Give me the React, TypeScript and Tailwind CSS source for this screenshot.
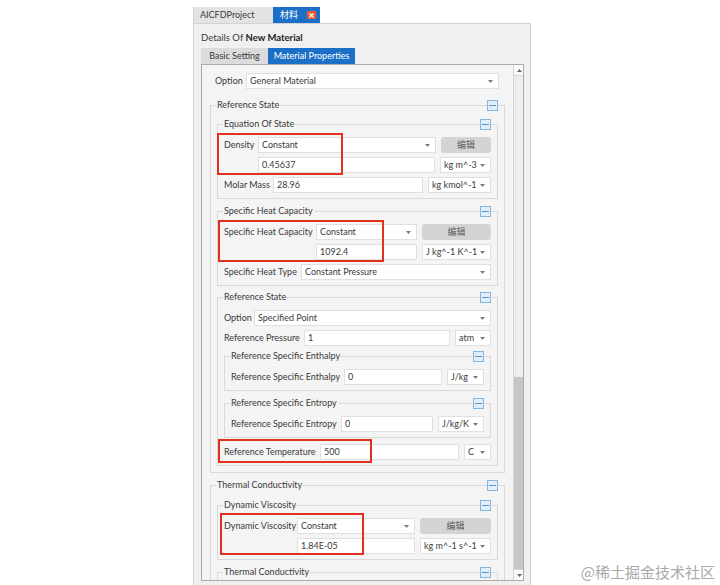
import React from 'react';

const BLUE = 'bg-[#1c6fc6]';

function Arrow() {
  return (
    <svg width="5" height="3" viewBox="0 0 5 3" className="shrink-0">
      <path d="M0 0 L5 0 L2.5 3 Z" fill="#7a7a7a" />
    </svg>
  );
}

function Combo({ text, className = '' }: { text: string; className?: string }) {
  return (
    <div className={`h-[16px] bg-white border border-[#e0e0e0] flex items-center justify-between pl-[3px] pr-[5px] ${className}`}>
      <span className="whitespace-nowrap overflow-hidden">{text}</span>
      <Arrow />
    </div>
  );
}

function Field({ text, className = '' }: { text: string; className?: string }) {
  return (
    <div className={`h-[16px] bg-white border border-[#e0e0e0] flex items-center pl-[3px] ${className}`}>
      <span className="whitespace-nowrap">{text}</span>
    </div>
  );
}

function EditButton({ className = '' }: { className?: string }) {
  return (
    <div className={`h-[16px] bg-[#d4d4d4] rounded-[3px] flex items-center justify-center text-[#5a5a5a] ${className}`}>
      编辑
    </div>
  );
}

function Collapse() {
  return (
    <div className="absolute right-[6px] top-[-6px] w-[11px] h-[11px] border border-[#86b5dd] bg-[#e2eef9] flex items-center justify-center">
      <div className="w-[7px] h-px bg-[#5d92c5]" />
    </div>
  );
}

function Group({ title, className = '', children }: { title: string; className?: string; children?: React.ReactNode }) {
  return (
    <div className={`relative border border-[#d9d9d9] px-[6px] pt-[12px] pb-[5px] flex flex-col gap-[4px] ${className}`}>
      <span className="absolute left-[5px] top-[-7px] px-px leading-[12px] bg-[#f4f4f4]">{title}</span>
      <Collapse />
      {children}
    </div>
  );
}

function RedBox({ className }: { className: string }) {
  return <div className={`absolute border-2 border-[#e2321f] pointer-events-none ${className}`} />;
}

function Label({ text, className }: { text: string; className: string }) {
  return <span className={`shrink-0 whitespace-nowrap ${className}`}>{text}</span>;
}

export default function App() {
  return (
    <div
      className="relative w-[720px] h-[585px] bg-white overflow-hidden text-[9px] text-[#3a3a3a]"
      style={{ fontFamily: 'Lato, "Noto Sans CJK SC", sans-serif' }}
    >
      <div className="ml-[193px] mt-[7px] w-[338px]">
        {/* document tabs */}
        <div className="flex h-[16px] items-stretch">
          <div className="w-[80px] bg-[#e3e3e3] border-l border-[#d4d4d4] flex items-center pl-[6px]">AICFDProject</div>
          <div className={`w-[47px] ${BLUE} text-white flex items-center pl-[7px] gap-[9px]`}>
            <span>材料</span>
            <span className="w-[9px] h-[8px] bg-[#ef5a2c] rounded-[1px] flex items-center justify-center">
              <svg width="5" height="5" viewBox="0 0 5 5">
                <path d="M0.5 0.5 L4.5 4.5 M4.5 0.5 L0.5 4.5" stroke="white" strokeWidth="1.2" />
              </svg>
            </span>
          </div>
          <div className="flex-1" />
        </div>

        {/* panel body */}
        <div className="h-[570px] bg-[#f0f0f0] border-x border-t border-[#d2d2d2] pl-[7px] pr-[6px] pt-[7px]">
          <div className="leading-[14px] text-[9.5px]">
            Details Of <span className="font-bold text-[#222]">New Material</span>
          </div>
          <div className="flex mt-[3px] h-[16px]">
            <div className="w-[67px] bg-[#dcdcdc] flex items-center justify-center">Basic Setting</div>
            <div className={`w-[87px] ${BLUE} text-white flex items-center justify-center`}>Material Properties</div>
          </div>

          <div className="h-[517px] border border-[#ababab] bg-[#f4f4f4] flex overflow-hidden">
            {/* scrolling content */}
            <div className="w-[311px] shrink-0 px-[8px] pt-[8px] flex flex-col overflow-hidden">
              <div className="flex items-center ml-[5px] mr-[6px]">
                <Label text="Option" className="w-[31px]" />
                <Combo text="General Material" className="flex-1" />
              </div>

              <Group title="Reference State" className="mt-[16px] pb-[6px]">
                <Group title="Equation Of State" className="mt-[6px]">
                  <div className="relative flex flex-col gap-[4px]">
                    <div className="flex items-center">
                      <Label text="Density" className="w-[34px]" />
                      <Combo text="Constant" className="flex-1" />
                      <EditButton className="w-[50px] ml-[5px]" />
                    </div>
                    <div className="flex items-center">
                      <div className="w-[34px] shrink-0" />
                      <Field text="0.45637" className="flex-1" />
                      <Combo text="kg m^-3" className="w-[51px] ml-[5px]" />
                    </div>
                    <RedBox className="left-[-7px] top-[-4px] w-[126px] h-[42px]" />
                  </div>
                  <div className="flex items-center">
                    <Label text="Molar Mass" className="w-[49px]" />
                    <Field text="28.96" className="flex-1" />
                    <Combo text="kg kmol^-1" className="w-[63px] ml-[5px]" />
                  </div>
                </Group>

                <Group title="Specific Heat Capacity" className="mt-[8px]">
                  <div className="relative flex flex-col gap-[4px]">
                    <div className="flex items-center">
                      <Label text="Specific Heat Capacity" className="w-[92px]" />
                      <Combo text="Constant" className="flex-1" />
                      <EditButton className="w-[69px] ml-[5px]" />
                    </div>
                    <div className="flex items-center">
                      <div className="w-[92px] shrink-0" />
                      <Field text="1092.4" className="flex-1" />
                      <Combo text="J kg^-1 K^-1" className="w-[69px] ml-[5px]" />
                    </div>
                    <RedBox className="left-[-6px] top-[-4px] w-[166px] h-[42px]" />
                  </div>
                  <div className="flex items-center">
                    <Label text="Specific Heat Type" className="w-[77px]" />
                    <Combo text="Constant Pressure" className="flex-1" />
                  </div>
                </Group>

                <Group title="Reference State" className="mt-[7px]">
                  <div className="flex items-center">
                    <Label text="Option" className="w-[30px]" />
                    <Combo text="Specified Point" className="flex-1" />
                  </div>
                  <div className="flex items-center">
                    <Label text="Reference Pressure" className="w-[80px]" />
                    <Field text="1" className="flex-1" />
                    <Combo text="atm" className="w-[36px] ml-[5px]" />
                  </div>

                  <Group title="Reference Specific Enthalpy" className="mt-[6px] pb-[4px]">
                    <div className="flex items-center">
                      <Label text="Reference Specific Enthalpy" className="w-[113px]" />
                      <Field text="0" className="flex-1" />
                      <Combo text="J/kg" className="w-[37px] ml-[5px]" />
                    </div>
                  </Group>

                  <Group title="Reference Specific Entropy" className="mt-[8px]">
                    <div className="flex items-center">
                      <Label text="Reference Specific Entropy" className="w-[110px]" />
                      <Field text="0" className="flex-1" />
                      <Combo text="J/kg/K" className="w-[46px] ml-[5px]" />
                    </div>
                  </Group>

                  <div className="relative flex items-center mt-[2px]">
                    <Label text="Reference Temperature" className="w-[96px]" />
                    <Field text="500" className="flex-1" />
                    <Combo text="C" className="w-[27px] ml-[5px]" />
                    <RedBox className="left-[-6px] top-[-5px] w-[154px] h-[24px]" />
                  </div>
                </Group>
              </Group>

              <Group title="Thermal Conductivity" className="mt-[12px] shrink-0">
                <Group title="Dynamic Viscosity" className="mt-[7px] pb-[4px]">
                  <div className="relative flex flex-col gap-[4px]">
                    <div className="flex items-center">
                      <Label text="Dynamic Viscosity" className="w-[73px]" />
                      <Combo text="Constant" className="flex-1" />
                      <EditButton className="w-[71px] ml-[5px]" />
                    </div>
                    <div className="flex items-center">
                      <div className="w-[73px] shrink-0" />
                      <Field text="1.84E-05" className="flex-1" />
                      <Combo text="kg m^-1 s^-1" className="w-[71px] ml-[5px]" />
                    </div>
                    <RedBox className="left-[-4px] top-[-5px] w-[144px] h-[42px]" />
                  </div>
                </Group>
                <Group title="Thermal Conductivity" className="mt-[8px] h-[30px]" />
              </Group>
            </div>

            {/* scrollbar */}
            <div className="w-[12px] shrink-0 flex flex-col border-l border-[#d6d6d6] bg-[#efefef]">
              <div className="h-[11px] bg-[#fafafa] border-b border-[#d6d6d6] flex items-center justify-center">
                <svg width="5" height="3" viewBox="0 0 5 3">
                  <path d="M0 3 L5 3 L2.5 0 Z" fill="#666" />
                </svg>
              </div>
              <div className="flex-1 border-x border-[#e2e2e2] mx-px" />
              <div className="h-[192px] bg-[#c6c6c6]" />
              <div className="h-[11px] bg-[#fafafa] border-t border-[#d6d6d6] flex items-center justify-center">
                <svg width="5" height="3" viewBox="0 0 5 3">
                  <path d="M0 0 L5 0 L2.5 3 Z" fill="#666" />
                </svg>
              </div>
            </div>
          </div>
        </div>
      </div>

      <div
        className="absolute right-[5px] bottom-[4px] text-[15px] leading-[18px] text-[#a8a8a8]"
        style={{ fontFamily: '"Noto Sans CJK SC", sans-serif' }}
      >
        @稀土掘金技术社区
      </div>
    </div>
  );
}
